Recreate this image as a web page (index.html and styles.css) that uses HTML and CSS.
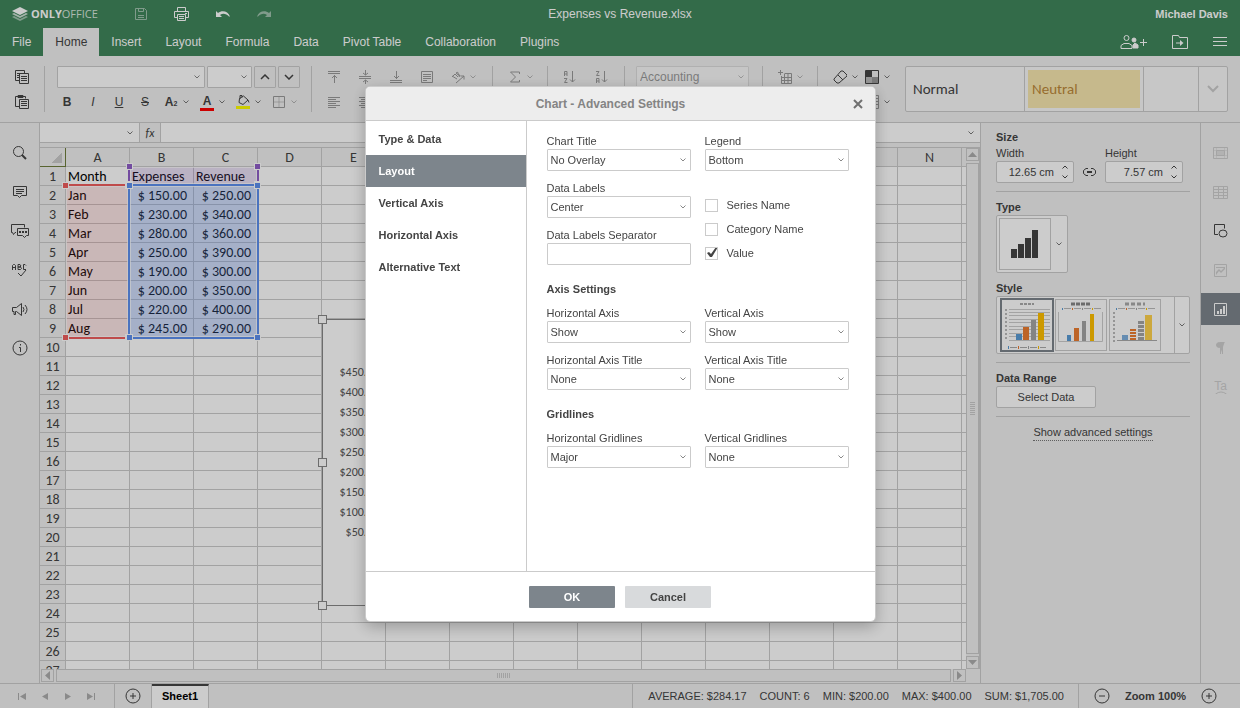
FILE: index.html
```html
<!DOCTYPE html>
<html lang="en">
<head>
  <meta charset="UTF-8">
  <meta name="viewport" content="width=device-width, initial-scale=1.0">
  <title>Expenses vs Revenue.xlsx</title>
  <link rel="stylesheet" href="styles.css">
</head>
<body>
  <div class="app">
    <header class="header">
      <div class="title-row">
        <div class="logo">
          <svg width="16" height="14" viewBox="0 0 16 14">
            <path d="M0 10l2-1 6 3 6-3 2 1-8 4z" fill="#fff" opacity=".5"/>
            <path d="M0 7l2-1 6 3 6-3 2 1-8 4z" fill="#fff" opacity=".75"/>
            <path d="M0 4l8-4 8 4-8 4z" fill="#fff"/>
          </svg>
          <span class="logo-text"><b>ONLY</b>OFFICE</span>
        </div>
        <div class="quick-actions">
          <button class="icon-btn faded" aria-label="Save">
            <svg width="14" height="14" viewBox="0 0 14 14" fill="none" stroke="#fff"><path d="M1.500 1.500h9l2 2v9h-11zM4.500 1.500v3h5v-3M4 8.500h6M4 10.500h6"/></svg>
          </button>
          <button class="icon-btn" aria-label="Print">
            <svg width="16" height="14" viewBox="0 0 16 14" fill="none" stroke="#fff"><path d="M3.500 4v-3.500h8v3.500M3.500 10.500h-3v-6h14v6h-3M3.500 7.500h8v6h-8zM5 9.500h5M5 11.500h5M11 6.500h2"/></svg>
          </button>
          <button class="icon-btn" aria-label="Undo">
            <svg width="14" height="8" viewBox="0 0 14 8"><path d="M0 1v6h6L4 5c3-2 6-1.500 9 1.500h1C12 1 6 0 2 3z" fill="#fff"/></svg>
          </button>
          <button class="icon-btn faded" aria-label="Redo">
            <svg width="14" height="8" viewBox="0 0 14 8"><path d="M14 1v6h-6l2-2c-3-2-6-1.500-9 1.500h-1C2 1 8 0 12 3z" fill="#fff"/></svg>
          </button>
        </div>
        <div class="doc-title">Expenses vs Revenue.xlsx</div>
        <div class="user-name">Michael Davis</div>
      </div>
      <nav class="tabs">
        <a href="#" class="tab">File</a>
        <a href="#" class="tab active">Home</a>
        <a href="#" class="tab">Insert</a>
        <a href="#" class="tab">Layout</a>
        <a href="#" class="tab">Formula</a>
        <a href="#" class="tab">Data</a>
        <a href="#" class="tab">Pivot Table</a>
        <a href="#" class="tab">Collaboration</a>
        <a href="#" class="tab">Plugins</a>
        <div class="tab-actions">
          <button class="icon-btn" aria-label="Share">
            <svg width="28" height="16" viewBox="0 0 28 16" fill="none" stroke="#fff"><circle cx="6.500" cy="4" r="2.500"/><path d="M1 14.500v-3l3-2h5l3 2v3zM20 8.500h7M23.500 5v7"/><path d="M13 14v-3l2-2 3 2v3z" fill="#fff"/><circle cx="14" cy="6" r="2" fill="#fff"/></svg>
          </button>
          <button class="icon-btn" aria-label="Open file location">
            <svg width="16" height="14" viewBox="0 0 16 14" fill="none" stroke="#fff"><path d="M.500.500h6l1 2h8v11h-15zM4 8h4"/><path d="M8 5l3.500 3-3.500 3z" fill="#fff" stroke="none"/></svg>
          </button>
          <button class="icon-btn" aria-label="View settings">
            <svg width="14" height="10" viewBox="0 0 14 10" stroke="#fff"><path d="M0 .500h14M0 4.500h14M0 8.500h14"/></svg>
          </button>
        </div>
      </nav>
    </header>

    <div class="toolbar">
      <div class="group">
        <div class="tool-row">
          <button class="tool" aria-label="Copy"><svg width="14" height="14" viewBox="0 0 14 14"><path d="M4.500 10.500h-4v-10h9v3M2 3.500h5M2 5.500h2M2 7.500h2M4.500 3.500h9v10h-9zM6 6.500h6M6 8.500h6M6 10.500h6"/></svg></button>
        </div>
        <div class="tool-row">
          <button class="tool" aria-label="Paste"><svg width="14" height="14" viewBox="0 0 14 14"><path d="M4.500 11.500h-4v-10h10v2M4.500 4.500h9v9h-9zM6 6.500h6M6 8.500h6M6 10.500h6"/><path d="M3 .500h5v2h-5z" fill="#444"/></svg></button>
        </div>
      </div>
      <i class="separator"></i>
      <div class="group font-group">
        <div class="tool-row font-row">
          <select class="combo font-name" aria-label="Font"></select>
          <select class="combo font-size" aria-label="Font size"></select>
          <button class="tool boxed" aria-label="Increment font size"><svg width="10" height="6" viewBox="0 0 10 6"><path d="M1 5l4-4 4 4" stroke-width="1.500"/></svg></button>
          <button class="tool boxed" aria-label="Decrement font size"><svg width="10" height="6" viewBox="0 0 10 6"><path d="M1 1l4 4 4-4" stroke-width="1.500"/></svg></button>
        </div>
        <div class="tool-row style-row">
          <button class="tool letter"><b>B</b></button>
          <button class="tool letter"><em>I</em></button>
          <button class="tool letter"><u>U</u></button>
          <button class="tool letter"><s>S</s></button>
          <button class="tool split letter"><b>A<small>2</small></b></button>
          <button class="tool split letter"><b class="font-color">A</b></button>
          <button class="tool split" aria-label="Fill color"><svg width="14" height="14" viewBox="0 0 14 14"><path d="M3.500 3.500l4-2.500 4.500 4-5 4.500-4-2zM4 4v-3.500h2v2"/><path d="M12 5l1 2.500" /><path d="M0 11h14v3h-14z" fill="#ffff00" stroke="none"/></svg></button>
          <button class="tool split faded" aria-label="Borders"><svg width="12" height="12" viewBox="0 0 12 12"><path d="M.500.500h11v11h-11z"/><path d="M6 1v10M1 6h10" opacity=".5"/></svg></button>
        </div>
      </div>
      <i class="separator"></i>
      <div class="group align-group">
        <div class="tool-row faded">
          <button class="tool" aria-label="Align top"><svg width="12" height="12" viewBox="0 0 12 12"><path d="M0 .500h12M0 2.500h12M6.500 12v-8M4 7l2.500-2.500 2.500 2.500"/></svg></button>
          <button class="tool" aria-label="Align middle"><svg width="12" height="14" viewBox="0 0 12 14"><path d="M0 6.500h12M0 8.500h12M6.500 0v5M6.500 14v-4M4 3l2.500 2 2.500-2M4 12l2.500-2 2.500 2"/></svg></button>
          <button class="tool" aria-label="Align bottom"><svg width="12" height="12" viewBox="0 0 12 12"><path d="M0 9.500h12M0 11.500h12M6.500 0v8M4 5l2.500 2.500 2.500-2.500"/></svg></button>
          <button class="tool" aria-label="Wrap text"><svg width="12" height="12" viewBox="0 0 12 12"><path d="M.500.500h11v11h-11zM2 3.500h8M2 5.500h8M2 7.500h8M2 9.500h4"/></svg></button>
          <button class="tool split" aria-label="Orientation"><svg width="14" height="13" viewBox="0 0 14 13"><path d="M5 12l8-7M9.500 5h3.500v3.500M1 5l5 3M1 6l3-3 3 3M5 2l4 3M5 2q3-2 2 2q3-1 1 2"/></svg></button>
        </div>
        <div class="tool-row faded">
          <button class="tool" aria-label="Align left"><svg width="12" height="12" viewBox="0 0 12 12"><path d="M0 1.500h12M0 3.500h8M0 5.500h12M0 7.500h8M0 9.500h12M0 11.500h8"/></svg></button>
          <button class="tool" aria-label="Align center"><svg width="12" height="12" viewBox="0 0 12 12"><path d="M0 1.500h12M2 3.500h8M0 5.500h12M2 7.500h8M0 9.500h12M2 11.500h8"/></svg></button>
        </div>
      </div>
      <i class="separator"></i>
      <div class="group">
        <div class="tool-row faded">
          <button class="tool split" aria-label="Summation"><svg width="10" height="12" viewBox="0 0 10 12"><path d="M9.500 3v-2h-9l5 5-5 5h9v-2"/></svg></button>
        </div>
      </div>
      <i class="separator"></i>
      <div class="group">
        <div class="tool-row sort-row faded">
          <button class="tool" aria-label="Sort ascending"><svg width="12" height="12" viewBox="0 0 12 12"><path d="M.500 5v-4.500h2.500v4.500M.500 3h2.500M0 7.500h3l-2.500 4h3M8.500 0v11M6 8.500l2.500 2.500 2.500-2.500"/></svg></button>
          <button class="tool" aria-label="Sort descending"><svg width="12" height="12" viewBox="0 0 12 12"><path d="M.500 12v-4.500h2.500v4.500M.500 10h2.500M0 .500h3l-2.500 4h3M8.500 0v11M6 8.500l2.500 2.500 2.500-2.500"/></svg></button>
        </div>
      </div>
      <i class="separator"></i>
      <div class="group format-group">
        <div class="tool-row faded">
          <select class="combo number-format" aria-label="Number format"><option>Accounting</option></select>
        </div>
      </div>
      <i class="separator"></i>
      <div class="group">
        <div class="tool-row faded">
          <button class="tool split" aria-label="Insert cells"><svg width="14" height="14" viewBox="0 0 14 14"><path d="M3.500 6v7.500h10v-10h-7M3 7.500h10M3 10.500h10M6.500 4v9M10 4v9M0 2.500h5M2.500 0v5"/></svg></button>
        </div>
      </div>
      <i class="separator"></i>
      <div class="group clear-group">
        <div class="tool-row">
          <button class="tool split" aria-label="Clear"><svg width="14" height="14" viewBox="0 0 14 14"><path d="M1 9l7-8h2l4 4v1l-8 7h-2l-3-3zM5 5l5 5"/></svg></button>
          <button class="tool split" aria-label="Conditional formatting"><svg width="14" height="14" viewBox="0 0 14 14"><path d="M.500.500h13v13h-13z"/><path d="M1 1h6v6h-6z" fill="#444" stroke="none"/><path d="M1 7h6v6h-6z" fill="#bbb" stroke="none"/><path d="M7 7h6v6h-6z" fill="#999" stroke="none"/></svg></button>
        </div>
        <div class="tool-row">
          <button class="tool split table-template" aria-label="Format as table"><svg width="14" height="14" viewBox="0 0 14 14"><path d="M.500.500h13v13h-13zM1 3.500h12M1 6.500h12M1 9.500h12M10 1v12"/></svg></button>
        </div>
      </div>
      <div class="style-gallery">
        <button class="cell-style">Normal</button>
        <button class="cell-style neutral"><span>Neutral</span></button>
        <span></span>
        <button class="gallery-more" aria-label="More cell styles"><svg width="12" height="8" viewBox="0 0 12 8"><path d="M1 1l5 5 5-5" stroke-width="2"/></svg></button>
      </div>
    </div>

    <main class="workspace">
      <aside class="left-menu">
        <button class="side-btn" aria-label="Search"><svg width="16" height="16" viewBox="0 0 16 16"><circle cx="6.500" cy="6.500" r="5"/><path d="M10 10l4 4" stroke-width="2"/></svg></button>
        <button class="side-btn" aria-label="Comments"><svg width="14" height="13" viewBox="0 0 14 13"><path d="M.500.500h13v9h-5l-2 2-2-2h-4zM3 3.500h8M3 5.500h8M3 7.500h6"/></svg></button>
        <button class="side-btn" aria-label="Chat"><svg width="18" height="14" viewBox="0 0 18 14"><path d="M5 8.500h-1l-1.500 2-1-2h-1v-8h13v3M6.500 4.500h11v7h-2l-2 2-2-2h-5z"/><path d="M8 8h2M11 8h2M14 8h2" stroke-width="2"/></svg></button>
        <button class="side-btn" aria-label="Spell checking"><svg width="16" height="14" viewBox="0 0 16 14"><path d="M.500 7v-4.500l1-1h1l1 1v4.500M.500 4.500h3M6 1.500v5h2.500l1-1-1-1.500h-2.500 2l1-1-1-1.500zM14 2.500l-1-1h-1.500v5h2.500M6 10l3 3 5-6"/></svg></button>
        <button class="side-btn" aria-label="Feedback"><svg width="16" height="13" viewBox="0 0 16 13"><path d="M.500 4.500h4l5-4v12l-5-4h-1v3h-1.500v-3h-1.500zM11 4q2 2.500 0 5M13 2q4 4.500 0 9"/></svg></button>
        <button class="side-btn" aria-label="About"><svg width="16" height="16" viewBox="0 0 16 16"><circle cx="8" cy="8" r="7"/><path d="M8.500 4v1.500M7 7.500h1.500v4.500"/></svg></button>
      </aside>

      <section class="editor">
        <div class="formula-bar">
          <input class="cell-name" type="text" aria-label="Cell name">
          <button class="fx-btn">fx</button>
          <input class="formula-input" type="text" aria-label="Formula">
        </div>
        <div class="sheet-area">
          <div class="sheet">
            <table class="cells">
              <thead><tr id="column-names"></tr></thead>
              <tbody id="rows"></tbody>
            </table>
            <div class="range range-names"><i></i><i></i><i></i><i></i></div>
            <div class="range range-categories"><i></i><i></i><i></i><i></i></div>
            <div class="range range-values"><i></i><i></i><i></i><i></i></div>
            <div class="chart">
              <ul class="value-axis">
                <li>$450.00</li>
                <li>$400.00</li>
                <li>$350.00</li>
                <li>$300.00</li>
                <li>$250.00</li>
                <li>$200.00</li>
                <li>$150.00</li>
                <li>$100.00</li>
                <li>$50.00</li>
              </ul>
              <i class="handle top"></i>
              <i class="handle middle"></i>
              <i class="handle bottom"></i>
            </div>
          </div>
          <div class="scroll vertical">
            <button class="scroll-btn" aria-label="Scroll up"><svg width="9" height="5" viewBox="0 0 9 5"><path d="M0 5l4.500-5 4.500 5z"/></svg></button>
            <div class="thumb"><i></i></div>
            <button class="scroll-btn" aria-label="Scroll down"><svg width="9" height="5" viewBox="0 0 9 5"><path d="M0 0l4.500 5 4.500-5z"/></svg></button>
          </div>
          <div class="scroll horizontal">
            <button class="scroll-btn" aria-label="Scroll left"><svg width="5" height="9" viewBox="0 0 5 9"><path d="M5 0l-5 4.500 5 4.500z"/></svg></button>
            <div class="thumb"><i></i></div>
            <button class="scroll-btn" aria-label="Scroll right"><svg width="5" height="9" viewBox="0 0 5 9"><path d="M0 0l5 4.500-5 4.500z"/></svg></button>
          </div>
        </div>
      </section>

      <aside class="settings">
        <h3>Size</h3>
        <div class="size-row">
          <div class="size-field">
            <label for="chart-width">Width</label>
            <input id="chart-width" class="spinner" type="text" value="12.65 cm">
          </div>
          <button class="ratio-btn" aria-label="Constant proportions"><svg width="13" height="8" viewBox="0 0 13 8"><path d="M5 .500h-2l-2.500 2v3l2.500 2h2M8 .500h2l2.500 2v3l-2.500 2h-2"/><path d="M4 4h5" stroke-width="2"/></svg></button>
          <div class="size-field">
            <label for="chart-height">Height</label>
            <input id="chart-height" class="spinner" type="text" value="7.57 cm">
          </div>
        </div>
        <hr>
        <h3>Type</h3>
        <button class="type-box" aria-label="Chart type">
          <span class="type-icon"><svg width="28" height="28" viewBox="0 0 28 28"><path d="M0 19h6v9H0zM7 14h6v14H7zM14 8h6v20h-6zM21 0h6v28h-6z" fill="#444" stroke="none"/></svg></span>
          <span class="box-arrow"></span>
        </button>
        <h3>Style</h3>
        <div class="style-box">
          <button class="thumbnail selected" aria-label="Style 1">
            <svg width="48" height="48" viewBox="0 0 48 48">
              <path d="M17 3h14" stroke="#aaa" stroke-width="2" stroke-dasharray="3 1"/>
              <path d="M6 8.500h41M6 11.500h41M6 14.500h41M6 18.500h41M6 21.500h41M6 25.500h41M6 28.500h41M6 32.500h41M6 35.500h41M6 39.500h41" stroke="#ccc"/>
              <path d="M3 8v31" stroke="#bbb" stroke-width="2" stroke-dasharray="2 2"/>
              <path d="M13 33h6v6h-6z" fill="#5b9bd5"/><path d="M20 26h6v13h-6z" fill="#ed7d31"/><path d="M28 19h5v20h-5z" fill="#a5a5a5"/><path d="M35 12h6v27h-6z" fill="#ffc000"/>
              <path d="M7 46.500h36" stroke="#aaa" stroke-dasharray="7 3"/>
              <path d="M5.500 45v3" stroke="#5b9bd5"/><path d="M15.500 45v3" stroke="#ed7d31"/><path d="M25.500 45v3" stroke="#a5a5a5"/><path d="M35.500 45v3" stroke="#ffc000"/>
            </svg>
          </button>
          <button class="thumbnail" aria-label="Style 2">
            <svg width="48" height="48" viewBox="0 0 48 48">
              <path d="M14 3h19" stroke="#888" stroke-width="3" stroke-dasharray="4 1"/>
              <path d="M7 7.500h37" stroke="#bbb" stroke-dasharray="7 3"/>
              <path d="M5.500 7v2" stroke="#5b9bd5"/><path d="M15.500 7v2" stroke="#ed7d31"/><path d="M25.500 7v2" stroke="#a5a5a5"/><path d="M35.500 7v2" stroke="#ffc000"/>
              <path d="M1.500 11v29.500h44v-29.500" stroke="#ccc" fill="none"/>
              <path d="M10 34h4v6h-4z" fill="#5b9bd5"/><path d="M17 27h5v13h-5z" fill="#ed7d31"/><path d="M25 20h4v20h-4z" fill="#a5a5a5"/><path d="M33 13h4v27h-4z" fill="#ffc000"/>
            </svg>
          </button>
          <button class="thumbnail" aria-label="Style 3">
            <svg width="48" height="48" viewBox="0 0 48 48">
              <path d="M14 3h20" stroke="#aaa" stroke-width="3" stroke-dasharray="4 2"/>
              <path d="M7 7.500h37" stroke="#bbb" stroke-dasharray="7 3"/>
              <path d="M5.500 7v2" stroke="#5b9bd5"/><path d="M15.500 7v2" stroke="#ed7d31"/><path d="M25.500 7v2" stroke="#a5a5a5"/><path d="M35.500 7v2" stroke="#ffc000"/>
              <path d="M3 11v30" stroke="#bbb" stroke-width="2" stroke-dasharray="2 2"/>
              <path d="M6 39.500h40" stroke="#aaa"/>
              <path d="M11 34h6v5h-6z" fill="#7fb0de"/>
              <path d="M22 39v-12" stroke="#ed7d31" stroke-width="6" stroke-dasharray="2 1"/><path d="M30 39v-19" stroke="#a5a5a5" stroke-width="6" stroke-dasharray="3 1"/><path d="M34 14h7v25h-7z" fill="#ffd34d"/>
            </svg>
          </button>
          <button class="box-arrow" aria-label="More styles"></button>
        </div>
        <hr>
        <h3>Data Range</h3>
        <button class="select-data">Select Data</button>
        <hr>
        <a href="#" class="advanced-link">Show advanced settings</a>
      </aside>

      <aside class="right-menu">
        <button class="side-btn disabled" aria-label="Cell settings"><svg width="15" height="12" viewBox="0 0 15 12"><path d="M.500.500h14v11h-14z"/><path d="M0 3.500h15M0 8.500h15M3.500 0v12M11.500 0v12" opacity=".4"/><path d="M3.500 3.500h8v5h-8z" fill="#999"/></svg></button>
        <button class="side-btn disabled" aria-label="Table settings"><svg width="15" height="13" viewBox="0 0 15 13"><path d="M.500.500h14v12h-14zM0 3.500h15M0 6.500h15M0 9.500h15M5.500 0v13M10.500 0v13"/></svg></button>
        <button class="side-btn" aria-label="Shape settings"><svg width="14" height="14" viewBox="0 0 14 14"><path d="M4 10.500h-3.500v-10h10v4"/><ellipse cx="9" cy="9.500" rx="4" ry="3.500"/></svg></button>
        <button class="side-btn disabled" aria-label="Image settings"><svg width="13" height="13" viewBox="0 0 13 13"><path d="M.500.500h12v12h-12z"/><path d="M2 11v-3l3-3 2 2 3-3h-8v-1h9v2l-4 4-2-2z" fill="#444" stroke="none"/></svg></button>
        <button class="side-btn active" aria-label="Chart settings"><svg width="13" height="13" viewBox="0 0 13 13"><path d="M.500.500h12v12h-12z" stroke="#fff"/><path d="M3 8h2v3h-2zM6 6h2v5h-2zM9 3h2v8h-2z" fill="#fff" stroke="none"/></svg></button>
        <button class="side-btn disabled" aria-label="Paragraph settings"><svg width="9" height="12" viewBox="0 0 9 12"><path d="M4.500 12v-11.500h4M6.500 12v-11.500M4.500.500h-1q-3 0-3 2.500t3 2.500h1z" fill="#444"/></svg></button>
        <button class="side-btn disabled text-art" aria-label="Text Art settings"><span>Ta</span><svg width="12" height="3" viewBox="0 0 12 3"><path d="M.500 3q5.500-4 11 0"/></svg></button>
      </aside>
    </main>

    <footer class="status-bar">
      <div class="sheet-nav">
        <button aria-label="First sheet"><svg width="8" height="7" viewBox="0 0 8 7"><path d="M0 0h1v7h-1zM8 0v7l-6-3.500z"/></svg></button>
        <button aria-label="Previous sheet"><svg width="8" height="7" viewBox="0 0 8 7"><path d="M7 0v7l-6-3.500z"/></svg></button>
        <button aria-label="Next sheet"><svg width="8" height="7" viewBox="0 0 8 7"><path d="M1 0v7l6-3.500z"/></svg></button>
        <button aria-label="Last sheet"><svg width="8" height="7" viewBox="0 0 8 7"><path d="M7 0h1v7h-1zM0 0v7l6-3.500z"/></svg></button>
      </div>
      <button class="add-sheet" aria-label="Add sheet"><svg width="16" height="16" viewBox="0 0 16 16"><circle cx="8" cy="8" r="7"/><path d="M5 8h6M8 5v6"/></svg></button>
      <button class="sheet-tab">Sheet1</button>
      <div class="stats">
        <span>AVERAGE: $284.17</span>
        <span>COUNT: 6</span>
        <span>MIN: $200.00</span>
        <span>MAX: $400.00</span>
        <span>SUM: $1,705.00</span>
      </div>
      <div class="zoom">
        <button aria-label="Zoom out"><svg width="16" height="16" viewBox="0 0 16 16"><circle cx="8" cy="8" r="7"/><path d="M5 8h6"/></svg></button>
        <b>Zoom 100%</b>
        <button aria-label="Zoom in"><svg width="16" height="16" viewBox="0 0 16 16"><circle cx="8" cy="8" r="7"/><path d="M5 8h6M8 5v6"/></svg></button>
      </div>
    </footer>
  </div>

  <div class="mask">
    <div class="dialog" role="dialog" aria-labelledby="dialog-title">
      <div class="dialog-header">
        <h2 id="dialog-title">Chart - Advanced Settings</h2>
        <button class="close-btn" aria-label="Close"><svg width="10" height="10" viewBox="0 0 10 10"><path d="M1 1l8 8M9 1l-8 8" stroke="#707070" stroke-width="2"/></svg></button>
      </div>
      <div class="dialog-body">
        <nav class="dialog-menu">
          <button>Type &amp; Data</button>
          <button class="active">Layout</button>
          <button>Vertical Axis</button>
          <button>Horizontal Axis</button>
          <button>Alternative Text</button>
        </nav>
        <form class="dialog-content">
          <div class="fields">
            <div class="field">
              <label for="chart-title">Chart Title</label>
              <select id="chart-title" class="combo"><option>No Overlay</option></select>
            </div>
            <div class="field">
              <label for="legend">Legend</label>
              <select id="legend" class="combo"><option>Bottom</option></select>
            </div>
            <div class="field">
              <label for="data-labels">Data Labels</label>
              <select id="data-labels" class="combo"><option>Center</option></select>
            </div>
            <div class="checks">
              <label><input type="checkbox"> Series Name</label>
              <label><input type="checkbox"> Category Name</label>
              <label><input type="checkbox" checked> Value</label>
            </div>
            <div class="field">
              <label for="separator">Data Labels Separator</label>
              <input id="separator" class="text-field" type="text">
            </div>
          </div>
          <h3>Axis Settings</h3>
          <div class="fields">
            <div class="field">
              <label for="h-axis">Horizontal Axis</label>
              <select id="h-axis" class="combo"><option>Show</option></select>
            </div>
            <div class="field">
              <label for="v-axis">Vertical Axis</label>
              <select id="v-axis" class="combo"><option>Show</option></select>
            </div>
            <div class="field">
              <label for="h-axis-title">Horizontal Axis Title</label>
              <select id="h-axis-title" class="combo"><option>None</option></select>
            </div>
            <div class="field">
              <label for="v-axis-title">Vertical Axis Title</label>
              <select id="v-axis-title" class="combo"><option>None</option></select>
            </div>
          </div>
          <h3>Gridlines</h3>
          <div class="fields">
            <div class="field">
              <label for="h-grid">Horizontal Gridlines</label>
              <select id="h-grid" class="combo"><option>Major</option></select>
            </div>
            <div class="field">
              <label for="v-grid">Vertical Gridlines</label>
              <select id="v-grid" class="combo"><option>None</option></select>
            </div>
          </div>
        </form>
      </div>
      <div class="dialog-footer">
        <button class="btn primary">OK</button>
        <button class="btn">Cancel</button>
      </div>
    </div>
  </div>

  <script src="script.js"></script>
</body>
</html>
```

FILE: styles.css
```css
* {
  margin: 0;
  padding: 0;
  box-sizing: border-box;
}

body {
  font-family: 'Liberation Sans', Arial, sans-serif;
  font-size: 11px;
  color: #444;
  overflow: hidden;
}

button, input, select {
  font: inherit;
  color: inherit;
  border: none;
  background: none;
  border-radius: 0;
  outline: none;
}

svg {
  display: block;
  fill: none;
}

ul {
  list-style: none;
}

h3 {
  font-size: 11px;
  line-height: 15px;
}

.app {
  display: flex;
  flex-direction: column;
  height: 100vh;
  background-color: #f1f1f1;
}

.faded {
  opacity: 0.5;
}

/* header */
.header {
  background-color: #40865c;
  color: #fff;
}

.title-row {
  display: grid;
  grid-template-columns: 1fr auto 1fr;
  align-items: center;
  height: 28px;
  padding: 0 12px;
}

.logo {
  grid-area: 1 / 1;
  display: flex;
  align-items: center;
  gap: 3px;
}

.logo-text {
  font-family: 'Open Sans', sans-serif;
  font-size: 11px;
  line-height: 14px;
  color: #d9e7de;
}

.logo-text b {
  color: #fff;
}

.quick-actions {
  grid-area: 1 / 1;
  display: flex;
  gap: 17px;
  padding-left: 117px;
}

.icon-btn {
  display: flex;
  align-items: center;
  justify-content: center;
  width: 24px;
  height: 28px;
}

.doc-title {
  grid-column: 2;
  font-size: 12px;
}

.user-name {
  grid-column: 3;
  text-align: right;
  font-weight: bold;
}

.tabs {
  display: flex;
  height: 28px;
}

.tab {
  padding: 0 12px;
  line-height: 28px;
  font-size: 12px;
  color: #fff;
  text-decoration: none;
}

.tab.active {
  background-color: #f1f1f1;
  color: #444;
}

.tab-actions {
  display: flex;
  gap: 16px;
  margin-left: auto;
  padding-right: 8px;
}

.tab-actions .icon-btn:first-child {
  width: 36px;
}

/* toolbar */
.toolbar {
  display: flex;
  align-items: flex-start;
  height: 67px;
  padding: 10px 12px 0 11px;
  border-bottom: 1px solid #cbcbcb;
}

.toolbar svg, .left-menu svg, .ratio-btn svg, .right-menu svg {
  stroke: #444;
}

.group {
  display: flex;
  flex-direction: column;
  gap: 3px;
  flex-shrink: 0;
}

.separator {
  width: 1px;
  height: 46px;
  margin: 0 11px;
  background-color: #cbcbcb;
  flex-shrink: 0;
}

.tool-row {
  display: flex;
  height: 22px;
}

.font-group {
  width: 244px;
}

.font-row {
  gap: 2px;
  justify-content: flex-end;
}

.style-row {
  gap: 4px;
}

.align-group {
  width: 158px;
}

.align-group .tool-row {
  gap: 9px;
}

.sort-row {
  gap: 10px;
}

.format-group {
  width: 115px;
}

.clear-group {
  align-items: flex-end;
}

.tool {
  display: flex;
  align-items: center;
  justify-content: center;
  width: 22px;
  height: 22px;
}

.tool.boxed {
  border: 1px solid #cbcbcb;
  border-radius: 1px;
}

.tool.split {
  width: 32px;
  padding-right: 10px;
  background: url("data:image/svg+xml,%3Csvg xmlns='http://www.w3.org/2000/svg' width='6' height='4'%3E%3Cpath d='M.5.5l2.500 2.500 2.500-2.500' fill='none' stroke='%23777'/%3E%3C/svg%3E") no-repeat right 3px center;
}

.tool.letter {
  font-size: 12px;
}

.tool small {
  font-size: 7px;
}

.table-template svg {
  stroke: #999;
}

.font-color {
  padding: 0 3px;
  line-height: 14px;
  border-bottom: 3px solid #f00;
}

.combo {
  appearance: none;
  height: 22px;
  padding: 0 3px;
  border: 1px solid #cbcbcb;
  border-radius: 1px;
  background: #fff url("data:image/svg+xml,%3Csvg xmlns='http://www.w3.org/2000/svg' width='6' height='4'%3E%3Cpath d='M.5.5l2.500 2.500 2.500-2.500' fill='none' stroke='%23888'/%3E%3C/svg%3E") no-repeat right 4px center;
}

.font-name {
  width: 148px;
}

.font-size {
  width: 45px;
}

.number-format {
  width: 113px;
  font-size: 12px;
}

.style-gallery {
  display: grid;
  grid-template-columns: 118px 119px 1fr 29px;
  flex: 1;
  height: 46px;
  margin-left: 12px;
  border: 1px solid #cbcbcb;
  border-radius: 2px;
  background-color: #f9f9f9;
}

.style-gallery > * + * {
  border-left: 1px solid #cbcbcb;
}

.cell-style {
  padding-left: 7px;
  font-family: Carlito, 'Noto Sans', sans-serif;
  font-size: 15px;
  text-align: left;
}

.cell-style.neutral {
  padding: 3px;
  color: #bd8839;
}

.neutral span {
  display: block;
  padding-left: 4px;
  line-height: 38px;
  background-color: #f8e8b0;
}

.gallery-more {
  display: flex;
  align-items: center;
  justify-content: center;
}

.gallery-more svg {
  stroke: #cbcbcb;
}

/* workspace */
.workspace {
  display: flex;
  flex: 1;
  min-height: 0;
}

.left-menu, .right-menu {
  display: flex;
  flex-direction: column;
  gap: 7px;
  width: 40px;
  padding-top: 14px;
  flex-shrink: 0;
}

.left-menu {
  border-right: 1px solid #cbcbcb;
}

.right-menu {
  border-left: 1px solid #cbcbcb;
}

.side-btn {
  display: flex;
  align-items: center;
  justify-content: center;
  height: 32px;
}

.side-btn.disabled {
  opacity: 0.2;
}

.side-btn.active {
  background-color: #7d858c;
}

.text-art {
  flex-direction: column;
  font-size: 12px;
  line-height: 10px;
}

.editor {
  display: flex;
  flex-direction: column;
  flex: 1;
  min-width: 0;
}

.formula-bar {
  display: flex;
  height: 20px;
  border-bottom: 1px solid #cbcbcb;
}

.cell-name {
  width: 100px;
  padding: 0 16px 0 4px;
  border-right: 1px solid #cbcbcb;
}

.cell-name, .formula-input {
  background: #fff url("data:image/svg+xml,%3Csvg xmlns='http://www.w3.org/2000/svg' width='6' height='4'%3E%3Cpath d='M.5.5l2.500 2.500 2.500-2.500' fill='none' stroke='%23777'/%3E%3C/svg%3E") no-repeat right 6px center;
}

.fx-btn {
  width: 21px;
  border-right: 1px solid #cbcbcb;
  font-family: Carlito, 'Noto Sans', sans-serif;
  font-size: 12px;
  font-style: italic;
  line-height: 18px;
}

.formula-input {
  flex: 1;
  padding: 0 16px 0 4px;
}

.sheet-area {
  display: grid;
  grid-template-columns: 1fr 14px;
  grid-template-rows: 1fr 14px;
  flex: 1;
  min-height: 0;
  margin-top: 4px;
  border-top: 1px solid #cbcbcb;
}

.sheet {
  position: relative;
  overflow: hidden;
  background-color: #fff;
}

.cells {
  width: 986px;
  table-layout: fixed;
  border-spacing: 0;
  font-family: Carlito, Lato, sans-serif;
  font-size: 14px;
  color: #000;
}

.cells th, .cells td {
  width: 64px;
  height: 19px;
  padding: 1px 2px 0;
  line-height: 17px;
  border-right: 1px solid #cbcbcb;
  border-bottom: 1px solid #cbcbcb;
  white-space: nowrap;
}

.cells th {
  font-weight: normal;
  color: #444;
  background-color: #f1f1f1;
}

.cells th:first-child {
  width: 26px;
  padding: 1px 0 0;
}

.cells .corner {
  border-color: #6f7d3c;
  background: linear-gradient(135deg, #f1f1f1 50%, #cbcbcb 50%) no-repeat 11px 4px / 11px 11px #f1f1f1;
}

.cells .money {
  padding-right: 6px;
  text-align: right;
}

/* ranges that feed the chart, drawn over the cells */
.range {
  position: absolute;
  border: 2px solid;
  box-shadow: inset 0 0 0 1px rgba(255, 255, 255, 0.7);
}

.range i {
  position: absolute;
  width: 7px;
  height: 7px;
  border: 1px solid #fff;
  background-color: currentColor;
}

.range i:nth-child(odd) { left: -4px; }
.range i:nth-child(even) { right: -4px; }
.range i:nth-child(-n+2) { top: -4px; }
.range i:nth-child(n+3) { bottom: -4px; }

.range-names {
  left: 88px;
  top: 19px;
  width: 131px;
  height: 19px;
  color: #905ec8;
  background-color: rgba(144, 94, 200, 0.2);
  border-top: none;
}

.range-categories {
  left: 26px;
  top: 36px;
  width: 62px;
  height: 155px;
  color: #ef5e5e;
  background-color: rgba(239, 94, 94, 0.16);
  border-left: none;
  border-right: none;
}

.range-values {
  left: 88px;
  top: 36px;
  width: 131px;
  height: 155px;
  color: #5e90ef;
  background-color: rgba(95, 144, 239, 0.3);
}

.chart {
  position: absolute;
  left: 282px;
  top: 171px;
  width: 478px;
  height: 287px;
  background-color: #fff;
  border: 1px solid #888;
}

.value-axis {
  width: 56px;
  padding-top: 42px;
  font-family: Carlito, Lato, sans-serif;
  font-size: 12px;
  text-align: right;
  color: #555;
}

.value-axis li {
  height: 20px;
  line-height: 20px;
}

.handle {
  position: absolute;
  left: -5px;
  width: 9px;
  height: 9px;
  border: 1px solid #888;
  background-color: #fff;
}

.handle.top { top: -5px; }
.handle.middle { top: 138px; }
.handle.bottom { bottom: -5px; }

.scroll {
  display: flex;
  gap: 2px;
}

.scroll svg {
  fill: #adadad;
}

.vertical {
  flex-direction: column;
  border-right: 1px solid #cbcbcb;
}

.horizontal {
  padding: 0 0 1px 1px;
}

.scroll-btn {
  display: flex;
  align-items: center;
  justify-content: center;
  width: 13px;
  height: 13px;
  border: 1px solid #cbcbcb;
}

.thumb {
  display: flex;
  align-items: center;
  justify-content: center;
  flex: 1;
  border: 1px solid #cbcbcb;
}

.vertical .thumb i {
  width: 5px;
  height: 13px;
  background: repeating-linear-gradient(#cbcbcb 0 1px, transparent 1px 2px);
}

.horizontal .thumb i {
  width: 13px;
  height: 5px;
  background: repeating-linear-gradient(90deg, #cbcbcb 0 1px, transparent 1px 2px);
}

/* right panel */
.settings {
  display: flex;
  flex-direction: column;
  align-items: flex-start;
  width: 220px;
  padding: 7px 10px 0 15px;
  border-left: 1px solid #cbcbcb;
  flex-shrink: 0;
}

.size-row {
  display: flex;
  align-items: flex-end;
}

.size-field label {
  display: block;
  line-height: 16px;
}

.spinner {
  display: block;
  width: 78px;
  height: 22px;
  padding-right: 19px;
  text-align: right;
  border: 1px solid #cbcbcb;
  border-radius: 2px;
  background: #fff url("data:image/svg+xml,%3Csvg xmlns='http://www.w3.org/2000/svg' width='6' height='14'%3E%3Cpath d='M.5 3.500l2.500-2.500 2.500 2.500M.5 10.500l2.500 2.500 2.500-2.500' fill='none' stroke='%23444'/%3E%3C/svg%3E") no-repeat right 5px center;
}

.ratio-btn {
  display: flex;
  align-items: center;
  justify-content: center;
  width: 31px;
  height: 22px;
}

.settings hr {
  width: 100%;
  height: 1px;
  margin: 8px 0;
  border: none;
  background-color: #cbcbcb;
}

.type-box, .style-box {
  display: flex;
  height: 58px;
  border: 1px solid #cbcbcb;
  border-radius: 2px;
  background-color: #fff;
}

.type-box {
  width: 72px;
  margin-bottom: 8px;
  padding: 2px 0 2px 2px;
}

.style-box {
  width: 100%;
  padding-left: 3px;
}

.type-icon {
  display: flex;
  align-items: center;
  justify-content: center;
  width: 52px;
  height: 52px;
  border: 1px solid #cbcbcb;
}

.box-arrow {
  flex: 1;
  align-self: stretch;
  background: url("data:image/svg+xml,%3Csvg xmlns='http://www.w3.org/2000/svg' width='6' height='4'%3E%3Cpath d='M.5.5l2.500 2.500 2.500-2.500' fill='none' stroke='%23777'/%3E%3C/svg%3E") no-repeat center;
}

.style-box .box-arrow {
  flex: none;
  width: 15px;
  margin-left: auto;
  border-left: 1px solid #cbcbcb;
}

.thumbnail {
  width: 52px;
  height: 52px;
  margin: 2px 1px;
  padding: 1px;
  border: 1px solid #cbcbcb;
}

.thumbnail.selected {
  width: 54px;
  height: 54px;
  margin: 1px 0;
  border: 2px solid #7d858c;
}

.select-data {
  width: 100px;
  height: 22px;
  border: 1px solid #cbcbcb;
  border-radius: 2px;
  background-color: #fff;
}

.advanced-link {
  align-self: center;
  line-height: 15px;
  color: #444;
  text-decoration: none;
  border-bottom: 1px dotted #777;
}

/* status bar */
.status-bar {
  display: flex;
  height: 25px;
  border-top: 1px solid #cbcbcb;
}

.status-bar svg {
  stroke: #444;
}

.sheet-nav {
  display: flex;
  align-items: center;
  gap: 15px;
  width: 115px;
  padding-left: 18px;
  border-right: 1px solid #cbcbcb;
}

.status-bar .sheet-nav svg {
  fill: #adadad;
  stroke: none;
}

.add-sheet {
  display: flex;
  align-items: center;
  justify-content: center;
  width: 37px;
  border-right: 1px solid #cbcbcb;
}

.sheet-tab {
  width: 57px;
  padding-bottom: 3px;
  border-top: 2px solid #444;
  border-right: 1px solid #cbcbcb;
  background-color: #fff;
  font-weight: bold;
  color: #000;
}

.stats {
  display: flex;
  align-items: center;
  gap: 13px;
  margin-left: auto;
  padding: 0 14px 0 15px;
  border-left: 1px solid #cbcbcb;
  border-right: 1px solid #cbcbcb;
}

.zoom {
  display: flex;
  align-items: center;
  justify-content: space-between;
  width: 161px;
  padding: 0 23px 0 15px;
}

/* dialog */
.mask {
  position: fixed;
  inset: 0;
  display: flex;
  align-items: center;
  justify-content: center;
  background-color: rgba(0, 0, 0, 0.2);
}

.dialog {
  width: 511px;
  border: 1px solid #cbcbcb;
  border-radius: 5px;
  background-color: #fff;
  background-clip: padding-box;
  box-shadow: 0 5px 15px rgba(0, 0, 0, 0.25);
  overflow: hidden;
}

.dialog-header {
  display: flex;
  align-items: center;
  height: 34px;
  padding: 0 12px 0 3px;
  background-color: #ededed;
  border-bottom: 1px solid #cbcbcb;
}

.dialog-header h2 {
  flex: 1;
  font-size: 12px;
  text-align: center;
  color: #848484;
}

.dialog-body {
  display: flex;
  min-height: 450px;
}

.dialog-menu {
  display: flex;
  flex-direction: column;
  width: 161px;
  padding-top: 2px;
  border-right: 1px solid #cbcbcb;
}

.dialog-menu button {
  height: 32px;
  padding-left: 13px;
  font-weight: bold;
  text-align: left;
}

.dialog-menu .active {
  background-color: #7d858c;
  color: #fff;
}

.dialog-content {
  flex: 1;
  padding: 13px 20px;
}

.dialog-content h3 {
  margin: 17px 0 9px;
}

.fields {
  display: grid;
  grid-template-columns: 144px 144px;
  gap: 10px 14px;
}

.field label {
  display: block;
  line-height: 15px;
}

.field .combo, .text-field {
  display: block;
  width: 100%;
  height: 22px;
}

.text-field {
  padding: 0 3px;
  border: 1px solid #cbcbcb;
  border-radius: 1px;
}

.checks {
  grid-row: span 2;
  align-self: end;
}

.checks label {
  display: flex;
  align-items: center;
  gap: 9px;
  height: 24px;
}

.checks input {
  appearance: none;
  width: 13px;
  height: 13px;
  border: 1px solid #cbcbcb;
}

.checks input:checked {
  background: url("data:image/svg+xml,%3Csvg xmlns='http://www.w3.org/2000/svg' width='13' height='13'%3E%3Cpath d='M2 6l2-1 2 2 5-7h2l-6 10h-2z' fill='%23444'/%3E%3C/svg%3E") no-repeat center border-box;
}

.dialog-footer {
  display: flex;
  justify-content: center;
  gap: 10px;
  padding: 14px 0 13px;
  border-top: 1px solid #cbcbcb;
}

.btn {
  width: 86px;
  height: 22px;
  font-weight: bold;
  border-radius: 1px;
  background-color: #d8dadc;
}

.btn.primary {
  background-color: #7d858c;
  color: #fff;
}
```

FILE: script.js
```js
const columns = [...'ABCDEFGHIJKLMN', ''];
const rowCount = 27;
const data = [
  ['Month', 'Expenses', 'Revenue'],
  ['Jan', '$ 150.00', '$ 250.00'],
  ['Feb', '$ 230.00', '$ 340.00'],
  ['Mar', '$ 280.00', '$ 360.00'],
  ['Apr', '$ 250.00', '$ 390.00'],
  ['May', '$ 190.00', '$ 300.00'],
  ['Jun', '$ 200.00', '$ 350.00'],
  ['Jul', '$ 220.00', '$ 400.00'],
  ['Aug', '$ 245.00', '$ 290.00']
];

document.getElementById('column-names').innerHTML =
  '<th class="corner"></th>' + columns.map(name => `<th>${name}</th>`).join('');

let html = '';
for (let r = 0; r < rowCount; r++) {
  html += `<tr><th>${r + 1}</th>`;
  columns.forEach((name, c) => {
    const value = data[r] && data[r][c] ? data[r][c] : '';
    html += `<td${value.startsWith('$') ? ' class="money"' : ''}>${value}</td>`;
  });
  html += '</tr>';
}
document.getElementById('rows').innerHTML = html;
```
